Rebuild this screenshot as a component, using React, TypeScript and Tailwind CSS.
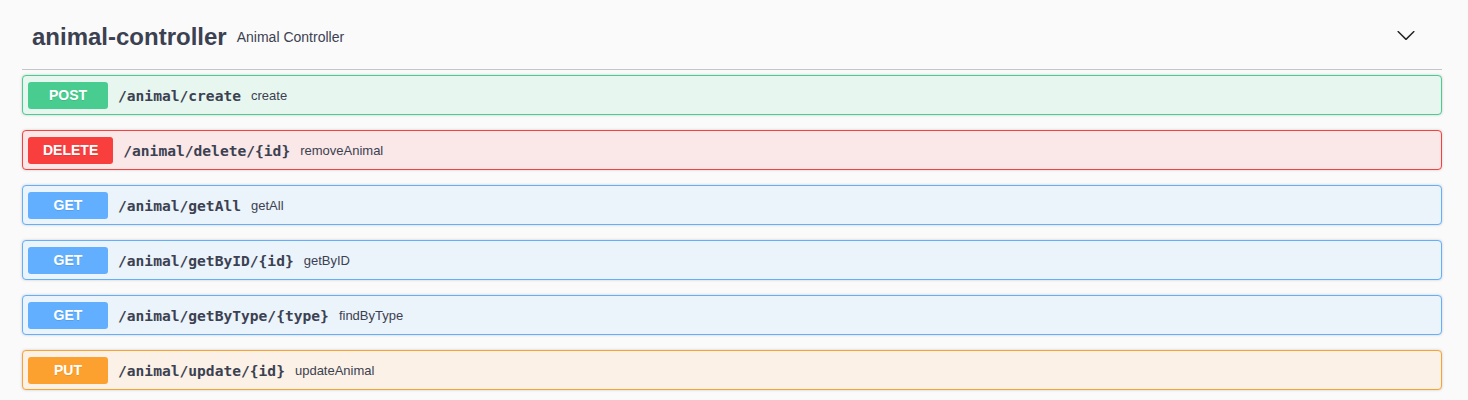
import React from "react";

type Op = {
  method: "POST" | "DELETE" | "GET" | "PUT";
  path: string;
  summary: string;
};

const ops: Op[] = [
  { method: "POST", path: "/animal/create", summary: "create" },
  { method: "DELETE", path: "/animal/delete/{id}", summary: "removeAnimal" },
  { method: "GET", path: "/animal/getAll", summary: "getAll" },
  { method: "GET", path: "/animal/getByID/{id}", summary: "getByID" },
  { method: "GET", path: "/animal/getByType/{type}", summary: "findByType" },
  { method: "PUT", path: "/animal/update/{id}", summary: "updateAnimal" },
];

// per-method colours, swagger-ui style
const styles = {
  POST: { box: "border-[#49cc90] bg-[#e8f6f0]", badge: "bg-[#49cc90]" },
  DELETE: { box: "border-[#f93e3e] bg-[#fae7e7]", badge: "bg-[#f93e3e]" },
  GET: { box: "border-[#61affe] bg-[#ebf3fb]", badge: "bg-[#61affe]" },
  PUT: { box: "border-[#fca130] bg-[#fbf1e6]", badge: "bg-[#fca130]" },
};

function Chevron() {
  return (
    <svg width="20" height="20" viewBox="0 0 20 20" className="-mt-[5px] mr-[26px]">
      <path
        fill="#222"
        d="M17.418 6.109c.272-.268.709-.268.979 0s.271.701 0 .969l-7.908 7.83c-.27.268-.707.268-.979 0l-7.908-7.83c-.27-.268-.27-.701 0-.969.271-.268.709-.268.979 0L10 13.25l7.418-7.141z"
      />
    </svg>
  );
}

function OpBlock({ op }: { op: Op }) {
  const s = styles[op.method];
  return (
    <div
      className={`mb-[15px] flex h-[40px] items-center rounded-[4px] border px-[5px] shadow-[0_0_3px_rgba(0,0,0,0.19)] ${s.box}`}
    >
      <span
        className={`flex h-[27px] min-w-[80px] items-center justify-center rounded-[3px] px-[15px] pt-[1px] text-[14px] font-bold text-white [text-shadow:0_1px_0_rgba(0,0,0,0.1)] ${s.badge}`}
      >
        {op.method}
      </span>
      <span className="px-[10px] pt-[1px] font-['DejaVu_Sans_Mono',monospace] text-[14.6px] font-bold text-[#3b4151]">
        {op.path}
      </span>
      <span className="pt-[2px] text-[13px] text-[#3b4151]">{op.summary}</span>
    </div>
  );
}

export default function App() {
  return (
    <div className="h-[400px] w-full overflow-hidden bg-[#fafafa] font-['Liberation_Sans',Arial,sans-serif]">
      <div className="ml-[22px] w-[1420px]">
        {/* tag header */}
        <div className="mt-[5px] mb-[5px] flex h-[65px] items-center border-b border-[#c5c6cb]">
          <h3 className="-mt-[1px] pl-[10px] text-[24px] font-bold text-[#3b4151]">
            animal-controller
          </h3>
          <small className="ml-[10px] text-[14px] text-[#3b4151]">
            Animal Controller
          </small>
          <div className="flex-1" />
          <Chevron />
        </div>

        {/* operations */}
        {ops.map((op) => (
          <OpBlock key={op.path} op={op} />
        ))}
      </div>
    </div>
  );
}
